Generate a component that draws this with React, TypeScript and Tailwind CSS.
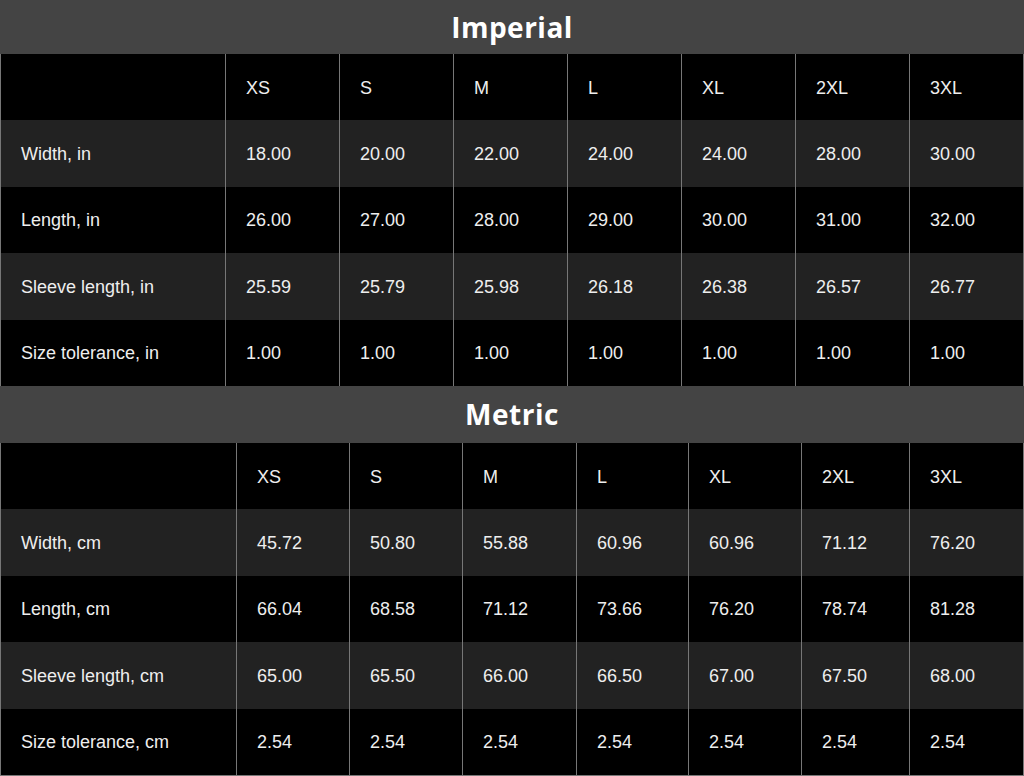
const sizes = ["XS", "S", "M", "L", "XL", "2XL", "3XL"];

const imperial = [
  { label: "Width, in", values: ["18.00", "20.00", "22.00", "24.00", "24.00", "28.00", "30.00"] },
  { label: "Length, in", values: ["26.00", "27.00", "28.00", "29.00", "30.00", "31.00", "32.00"] },
  { label: "Sleeve length, in", values: ["25.59", "25.79", "25.98", "26.18", "26.38", "26.57", "26.77"] },
  { label: "Size tolerance, in", values: ["1.00", "1.00", "1.00", "1.00", "1.00", "1.00", "1.00"] },
];

const metric = [
  { label: "Width, cm", values: ["45.72", "50.80", "55.88", "60.96", "60.96", "71.12", "76.20"] },
  { label: "Length, cm", values: ["66.04", "68.58", "71.12", "73.66", "76.20", "78.74", "81.28"] },
  { label: "Sleeve length, cm", values: ["65.00", "65.50", "66.00", "66.50", "67.00", "67.50", "68.00"] },
  { label: "Size tolerance, cm", values: ["2.54", "2.54", "2.54", "2.54", "2.54", "2.54", "2.54"] },
];

const Row = ({
  label,
  values,
  cols,
  striped,
}: {
  label: string;
  values: string[];
  cols: string;
  striped: boolean;
}) => (
  <div className={`grid h-[66.4px] border-x border-[#777] ${cols} ${striped ? "bg-[#222]" : "bg-black"}`}>
    <div className="flex items-center pl-5 pt-0.5">{label}</div>
    {values.map((v, i) => (
      <div key={i} className="flex items-center border-l border-[#777] pl-5 pt-0.5">
        {v}
      </div>
    ))}
  </div>
);

const Section = ({
  title,
  titleHeight,
  cols,
  rows,
}: {
  title: string;
  titleHeight: string;
  cols: string;
  rows: { label: string; values: string[] }[];
}) => (
  <div>
    <div
      className={`flex items-center justify-center bg-[#444] ${titleHeight} text-[28px] font-bold tracking-[0.5px] text-white`}
      style={{ fontFamily: '"Open Sans", sans-serif' }}
    >
      {title}
    </div>
    <Row label="" values={sizes} cols={cols} striped={false} />
    {rows.map((r, i) => (
      <Row key={r.label} label={r.label} values={r.values} cols={cols} striped={i % 2 === 0} />
    ))}
  </div>
);

export default function App() {
  return (
    <div
      className="h-[776px] w-[1024px] overflow-hidden bg-black text-[18px] text-[#eee]"
      style={{ fontFamily: '"Liberation Sans", Arial, sans-serif' }}
    >
      <Section
        title="Imperial"
        titleHeight="h-[54px]"
        cols="grid-cols-[224px_114px_114px_114px_114px_114px_114px_1fr]"
        rows={imperial}
      />
      <Section
        title="Metric"
        titleHeight="h-[57px]"
        cols="grid-cols-[235px_113px_113px_114px_112px_113px_108px_1fr]"
        rows={metric}
      />
      <div className="h-px bg-[#777]" />
    </div>
  );
}
